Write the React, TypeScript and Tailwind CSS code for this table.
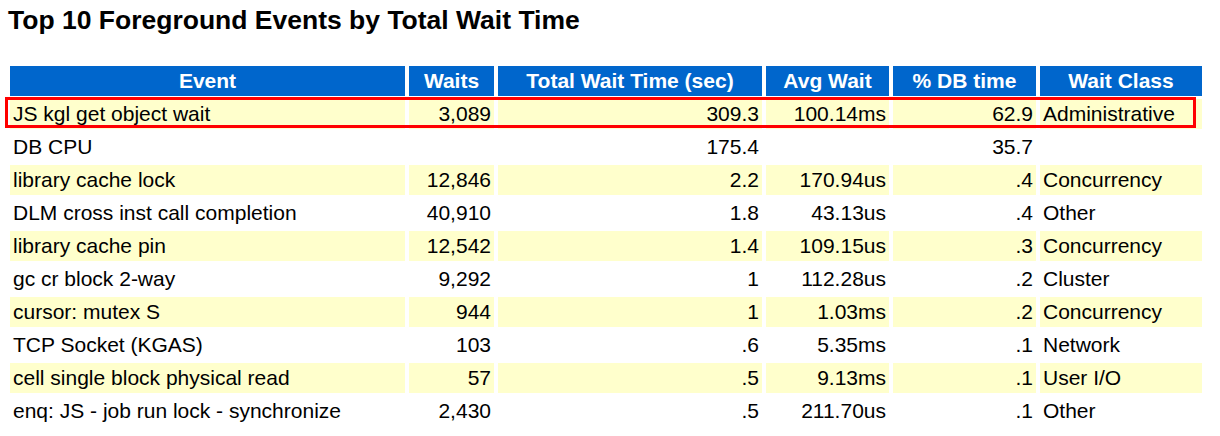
import React from "react";

const rows: [string, string, string, string, string, string][] = [
  ["JS kgl get object wait", "3,089", "309.3", "100.14ms", "62.9", "Administrative"],
  ["DB CPU", "", "175.4", "", "35.7", ""],
  ["library cache lock", "12,846", "2.2", "170.94us", ".4", "Concurrency"],
  ["DLM cross inst call completion", "40,910", "1.8", "43.13us", ".4", "Other"],
  ["library cache pin", "12,542", "1.4", "109.15us", ".3", "Concurrency"],
  ["gc cr block 2-way", "9,292", "1", "112.28us", ".2", "Cluster"],
  ["cursor: mutex S", "944", "1", "1.03ms", ".2", "Concurrency"],
  ["TCP Socket (KGAS)", "103", ".6", "5.35ms", ".1", "Network"],
  ["cell single block physical read", "57", ".5", "9.13ms", ".1", "User I/O"],
  ["enq: JS - job run lock - synchronize", "2,430", ".5", "211.70us", ".1", "Other"],
];

const headers = ["Event", "Waits", "Total Wait Time (sec)", "Avg Wait", "% DB time", "Wait Class"];

export default function App() {
  return (
    <div
      className="w-[1220px] h-[436px] bg-white text-black overflow-hidden"
      style={{ fontFamily: '"Liberation Sans", Arial, sans-serif' }}
    >
      <h1 className="pl-[8px] pt-[5px] text-[26.5px] leading-[30px] font-bold">
        Top 10 Foreground Events by Total Wait Time
      </h1>
      <div className="relative mt-[31px] ml-[10px] grid grid-cols-[395px_85px_264px_123px_143px_162px] gap-x-[4px] gap-y-[3px] w-[1192px]">
        {headers.map((h) => (
          <div
            key={h}
            className="h-[30px] bg-[#0066cc] text-white font-bold text-[21px] leading-[30px] text-center whitespace-nowrap"
          >
            {h}
          </div>
        ))}
        {rows.map((r, i) => {
          const bg = i % 2 === 0 ? "bg-[#ffffcc]" : "bg-white";
          return (
            <React.Fragment key={i}>
              <div className={`${bg} h-[30px] text-[21px] leading-[30px] pl-[3px] whitespace-nowrap`}>{r[0]}</div>
              <div className={`${bg} h-[30px] text-[21px] leading-[30px] pr-[3px] text-right`}>{r[1]}</div>
              <div className={`${bg} h-[30px] text-[21px] leading-[30px] pr-[3px] text-right`}>{r[2]}</div>
              <div className={`${bg} h-[30px] text-[21px] leading-[30px] pr-[3px] text-right`}>{r[3]}</div>
              <div className={`${bg} h-[30px] text-[21px] leading-[30px] pr-[3px] text-right`}>{r[4]}</div>
              <div className={`${bg} h-[30px] text-[21px] leading-[30px] pl-[3px] whitespace-nowrap`}>{r[5]}</div>
            </React.Fragment>
          );
        })}
        <div className="absolute left-[-5px] top-[31px] w-[1191px] h-[31px] border-[3px] border-[#ff0000] pointer-events-none" />
      </div>
    </div>
  );
}
